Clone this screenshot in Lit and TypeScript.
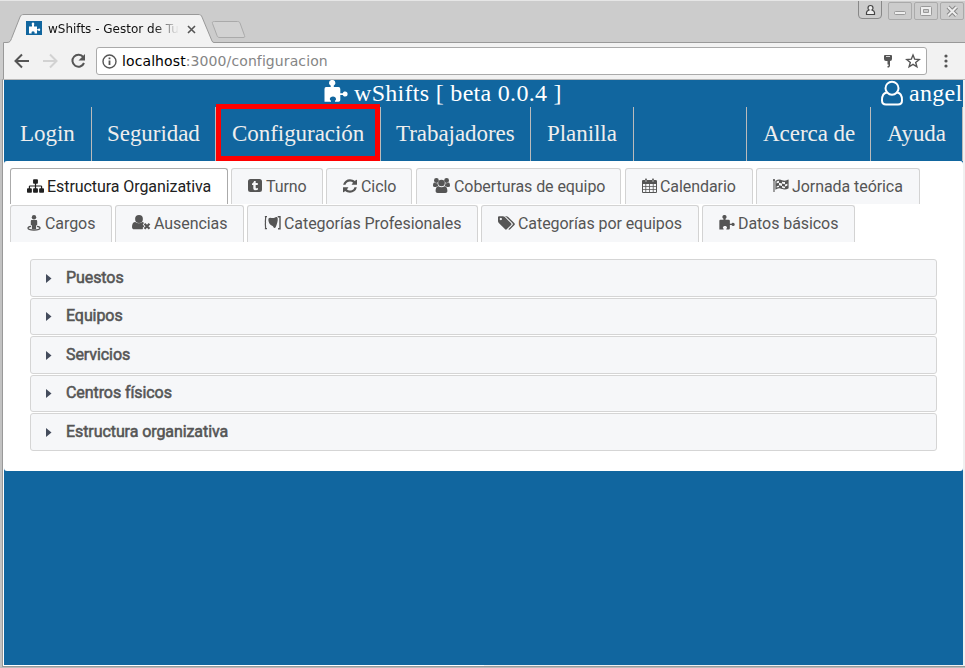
import { LitElement, html, css, svg } from "lit";
import { customElement } from "lit/decorators.js";

const icons: Record<string, { box: string; w: number; h: number; body: unknown }> = {
  sitemap: { box: "0 0 1792 1792", w: 17, h: 16, body: svg`<path d="M1792 1248v320q0 40-28 68t-68 28h-320q-40 0-68-28t-28-68v-320q0-40 28-68t68-28h96v-192h-512v192h96q40 0 68 28t28 68v320q0 40-28 68t-68 28h-320q-40 0-68-28t-28-68v-320q0-40 28-68t68-28h96v-192h-512v192h96q40 0 68 28t28 68v320q0 40-28 68t-68 28h-320q-40 0-68-28t-28-68v-320q0-40 28-68t68-28h96v-192q0-52 38-90t90-38h512v-192h-96q-40 0-68-28t-28-68v-320q0-40 28-68t68-28h320q40 0 68 28t28 68v320q0 40-28 68t-68 28h-96v192h512q52 0 90 38t38 90v192h96q40 0 68 28t28 68z"/>` },
  tumblr: { box: "0 0 14 16", w: 14, h: 16, body: svg`<path fill-rule="evenodd" d="M2.500 1h9a2.500 2.500 0 0 1 2.500 2.500v8a2.500 2.500 0 0 1-2.500 2.500h-9a2.500 2.500 0 0 1-2.500-2.500v-8a2.500 2.500 0 0 1 2.500-2.500zM6 3c-.2 1.400-.9 2.100-2 2.500v1.500h1.300v3.200c0 1.500 1 2.100 2.400 2.100 1 0 1.700-.3 2.300-.7v-1.700c-.9.5-2.300.7-2.300-.5V7h2.100V5.100H7.700V3z"/>` },
  refresh: { box: "128 0 1536 1792", w: 14, h: 16, body: svg`<path d="M1639 1056q0 5-1 7-64 268-268 434.500t-478 166.500q-146 0-282.500-55t-243.500-157l-129 129q-19 19-45 19t-45-19-19-45v-448q0-26 19-45t45-19h448q26 0 45 19t19 45-19 45l-137 137q71 66 161 102t187 36q134 0 250-65t186-179q11-17 53-117 8-23 30-23h192q13 0 22.500 9.500t9.500 22.500zm25-800v448q0 26-19 45t-45 19h-448q-26 0-45-19t-19-45 19-45l138-138q-148-137-349-137-134 0-250 65t-186 179q-11 17-53 117-8 23-30 23h-199q-13 0-22.500-9.500t-9.500-22.500v-7q65-268 270-434.500t480-166.500q146 0 284 55.500t245 156.500l130-129q19-19 45-19t45 19 19 45z"/>` },
  group: { box: "0 0 17 16", w: 17, h: 16, body: svg`<circle cx="3.400" cy="2.500" r="2.400"/><circle cx="13.600" cy="2.500" r="2.400"/><circle cx="8.500" cy="5" r="3.300"/><path d="M0 8C0 5.800.4 4.500 1.500 4.500c.5.400 1.800.9 2.900.6.100 1.300.5 2 .9 2.800-.9 0-1.600.4-2.100 1H1.500C.6 8.900 0 8.500 0 8zM17 8C17 5.800 16.600 4.500 15.500 4.500c-.5.400-1.800.9-2.900.6-.1 1.300-.5 2-.9 2.800.9 0 1.600.4 2.100 1h1.700c.9 0 1.500-.4 1.500-.9zM5.500 8.300c1.600 1.400 4.400 1.400 6 0 2.100-.1 2.900 2.200 2.900 4.700 0 1.300-.8 2-2 2H4.600c-1.200 0-2-.7-2-2 0-2.500.8-4.800 2.900-4.700z"/>` },
  calendar: { box: "0 0 15 16", w: 15, h: 16, body: svg`<path fill-rule="evenodd" d="M3 1.500C3 .3 5 .3 5 1.500V2h5v-.5c0-1.200 2-1.200 2 0V2h1.500c.8 0 1.500.5 1.500 1.300v10.400c0 .8-.6 1.300-1.300 1.300H1.300C.5 15 0 14.500 0 13.700V3.300C0 2.500.6 2 1.300 2H3zM1 6v2.200h2.400V6zm3.200 0v2.200h2.900V6zm3.700 0v2.200h2.900V6zm3.700 0v2.200H14V6zM1 9v2.200h2.400V9zm3.200 0v2.200h2.900V9zm3.700 0v2.200h2.900V9zm3.700 0v2.200H14V9zM1 12v2h2.400v-2zm3.200 0v2h2.900v-2zm3.700 0v2h2.900v-2zm3.700 0v2H14v-2zM3.700 1.500V4h.6V1.500zm7 0V4h.6V1.500z"/>` },
  flag: { box: "0 0 16 16", w: 16, h: 16, body: svg`<path d="M1 1.500V14" fill="none" stroke="currentColor" stroke-width="1.100"/><circle cx="1" cy="2" r="1"/><path fill="none" stroke="currentColor" stroke-width="1.200" d="M3 3.200c2-1.400 4-1.600 6-.3 2 1 4 .6 6-.5v7.500c-2 1.100-4 1.400-6 .3-2-1-4-.8-6 .5z"/><path d="M6 2l3 .8v2.700L6 4.700zM3 5.500l3-.8v2.800L3 8.500zM9 5.500l3 .7v2.600L9 8.100zM12 3.500l3-.8v2.800l-3 .9zM6 7.300l3 .8v2.500L6 9.600zM12 8.500l3-1v2.400l-3 1z"/>` },
  street: { box: "0 0 14 16", w: 14, h: 16, body: svg`<circle cx="7" cy="2.200" r="2.200"/><path d="M5 5h4c.9 0 1.200.5 1.200 1.200v3.300c0 .7-.6.900-1.100.9V14H4.900v-3.600c-.5 0-1.100-.2-1.100-.9V6.200C3.800 5.500 4.100 5 5 5z"/><path d="M4 11.400c-1.900.3-3 .8-3 1.600 0 1.200 2.600 2 6 2s6-.8 6-2c0-.8-1.100-1.300-3-1.600" fill="none" stroke="currentColor" stroke-width="1.300"/>` },
  userx: { box: "0 0 19 16", w: 19, h: 16, body: svg`<circle cx="7" cy="4" r="3.900"/><path d="M3.300 7C1.200 7 0 8.900 0 12 0 13.500.9 14.300 2.300 14.300h8.300l.4-.8-.3-.7 1.600-1.600-1.600-1.600L12 7.900c-.4-.6-1-.9-1.700-.9-2 1.600-5 1.600-7 0z"/><path d="M12.500 8.700l5 5M17.500 8.700l-5 5" stroke="currentColor" stroke-width="2.200"/>` },
  category: { box: "0 0 17 16", w: 17, h: 16, body: svg`<path d="M3 1.700H1.500c.5 2-.5 4 0 6-.5 2 .4 4 0 6H3" fill="none" stroke="currentColor" stroke-width="1.200"/><path d="M4.500 3.500C6 1.500 8.500 4 10.500 2.700 12 1.500 13.500 1.500 13.700 3.500 14 6 13 9 11.800 12c-.6 1.300-1.900 1.200-2.300.2C9 10.500 7.500 11 6.200 9.500 4.800 7.800 4 5.500 4.500 3.500z"/><path d="M13.700 1.700h2.300v12h-2" fill="none" stroke="currentColor" stroke-width="1.400"/>` },
  tags: { box: "0 0 1920 1792", w: 17, h: 16, body: svg`<path d="M448 448q0-53-37.500-90.500t-90.500-37.500-90.500 37.500-37.500 90.500 37.500 90.500 90.500 37.500 90.500-37.500 37.500-90.500zm1067 576q0 53-37 90l-491 492q-39 37-91 37-53 0-90-37l-715-716q-38-37-64.500-101t-26.500-117v-416q0-52 38-90t90-38h416q53 0 117 26.500t102 64.500l715 714q37 39 37 91zm384 0q0 53-37 90l-491 492q-39 37-91 37-36 0-59-14t-53-45l470-470q37-37 37-90 0-52-37-91l-715-714q-38-38-102-64.500t-117-26.500h224q53 0 117 26.500t102 64.500l715 714q37 39 37 91z"/>` },
  puzzle: { box: "0 0 24 24", w: 16, h: 16, body: svg`<path d="M.5 9Q.5 7 2 7h4.700V5.600C5.500 4.900 5 4 5 3.100a3.200 3.200 0 0 1 6.400 0c0 .9-.5 1.800-1.600 2.500V7H14.500q1.800 0 1.800 2v4.200h2.500c.6-1.200 1.300-1.600 2.300-1.600a2.500 2.500 0 0 1 0 5c-1 0-1.700-.5-2.300-1.600h-2.500v5q0 1.800-1.800 1.800H11v-1c.8-.5 1-1 1-1.700 0-1.500-1.300-2.500-3-2.500s-3.200 1-3.200 2.500c0 .7.400 1.200 1.200 1.700v1H.5z"/>` },
  user: { box: "0 0 24 28", w: 24, h: 28, body: svg`<path fill="none" stroke="currentColor" stroke-width="2" d="M6.800 12.800C3 12.800 2 17 2 20.500c0 2.700 1.700 4 4 4h12c2.300 0 4-1.300 4-4 0-3.500-1-7.700-4.800-7.700"/><circle cx="12" cy="8.200" r="6.500" fill="none" stroke="currentColor" stroke-width="2"/>` },
};

const icon = (name: string, w?: number, h?: number) => {
  const i = icons[name];
  return html`<svg width=${w ?? i.w} height=${h ?? i.h} viewBox=${i.box} fill="currentColor" preserveAspectRatio="none">${i.body}</svg>`;
};

type Tab = { label: string; icon: string; width: number; lead: number; gap?: number };

const tabRows: Tab[][] = [
  [
    { label: "Estructura Organizativa", icon: "sitemap", width: 218, lead: 37 },
    { label: "Turno", icon: "tumblr", width: 92, lead: 35 },
    { label: "Ciclo", icon: "refresh", width: 86, lead: 35 },
    { label: "Coberturas de equipo", icon: "group", width: 205, lead: 38, gap: 4 },
    { label: "Calendario", icon: "calendar", width: 128, lead: 35, gap: 4 },
    { label: "Jornada teórica", icon: "flag", width: 164, lead: 36 },
  ],
  [
    { label: "Cargos", icon: "street", width: 102, lead: 35 },
    { label: "Ausencias", icon: "userx", width: 129, lead: 39 },
    { label: "Categorías Profesionales", icon: "category", width: 231, lead: 37 },
    { label: "Categorías por equipos", icon: "tags", width: 218, lead: 37 },
    { label: "Datos básicos", icon: "puzzle", width: 153, lead: 36 },
  ],
];

@customElement("app-root")
export class AppRoot extends LitElement {
  static styles = css`
    :host { display: block; width: 965px; height: 668px; overflow: hidden; }
    * { box-sizing: border-box; }
    svg { display: block; flex: none; }
    .window { height: 668px; display: flex; flex-direction: column; background: #ccc; border-top: 1px solid #e6e6e6; }
    .strip { height: 42px; display: flex; position: relative; flex: none; }
    .shape { position: absolute; left: 0; top: 0; }
    .caption { display: flex; align-items: center; position: relative; margin: 14px 0 0 26px; height: 26px; width: 176px; font: 12px/26px "DejaVu Sans", sans-serif; white-space: nowrap; color: #111; }
    .caption span { width: 136px; margin-left: 6px; padding-top: 2px; -webkit-mask-image: linear-gradient(90deg, #000 106px, transparent 131px); }
    .caption .close { margin: 2px 0 0 3px; }
    .controls { position: absolute; right: 0; top: 0; }
    .bar { height: 36px; flex: none; display: flex; align-items: center; background: #f2f2f2; margin-left: 3px; border-left: 1px solid #999; padding-left: 10px; }
    .bar > svg + svg { margin-left: 12px; }
    .field { width: 831px; height: 28px; border: 1px solid #aaa; border-radius: 3px; background: #fff; display: flex; align-items: center; margin-left: 10px; padding: 0 5px; font: 14px/26px "DejaVu Sans", sans-serif; letter-spacing: 0.1px; color: #858585; }
    .field b { font-weight: 400; color: #000; }
    .url { margin-left: 5px; flex: 1; }
    .field .star { margin-left: 12px; }
    .bar > .more { margin-left: 17px; }
    .frame { height: 589px; display: flex; background: #f2f2f2; border-left: 2px solid #c2c2c2; border-bottom: 1px solid #bbb; }
    .rim { flex: 1; border: solid #999; border-width: 0 0 1px 1px; padding: 0 2px 1px 1px; border-top: 1px solid #b8b8b8; background: linear-gradient(90deg, #fff 50%, #f0f0f0 50%); }
    .page { height: 585px; width: 959px; background: #11669f; overflow: hidden; }
    .head { height: 27px; display: flex; font: 24px/27px "Liberation Serif", serif; letter-spacing: 0.3px; color: #fff; position: relative; white-space: nowrap; }
    .brand { margin-left: 320px; display: flex; flex: 1; gap: 6px; }
    .who { display: flex; gap: 5px; width: 83px; }
    .nav { height: 54px; display: flex; font: 23px/53px "Liberation Serif", serif; letter-spacing: -0.05px; color: #eee; white-space: nowrap; }
    .nav div { border-right: 1px solid #bbb; padding-left: 16px; position: relative; }
    .n1 { width: 88px; } .n2 { width: 124px; } .n3 { width: 165px; } .n4 { width: 150px; } .n5 { width: 103px; } .n6 { width: 113px; } .n7 { width: 124px; } .n8 { width: 92px; }
    .nav .n2, .nav .n4 { padding-left: 15px; }
    .mark { position: absolute; left: 0; top: -3px; width: 164px; height: 57px; border: 5px solid #f00; }
    .panel { height: 310px; background: #fff; border-radius: 3px; padding: 7px 6px; font: 16px/36px Roboto, sans-serif; color: #555; }
    .tabs { display: flex; gap: 3px; height: 36px; margin-bottom: 1px; letter-spacing: -0.07px; }
    .tabs.second { height: 37px; margin: 0; }
    .tab { border: 1px solid #d3d3d3; border-bottom: 0; border-radius: 3px 3px 0 0; background: #f6f7f9; display: flex; align-items: center; padding: 0 0 0 16px; line-height: 35px; white-space: nowrap; }
    .tab svg { margin-bottom: 1px; }
    .second .tab { padding-bottom: 2px; line-height: 33px; }
    .tab.on { background: #fff; border-color: #aaa; color: #212121; }
    .lead { flex: none; }
    .list { margin: 17px 20px 0; display: flex; flex-direction: column; gap: 1px; }
    .row { height: 37.600px; border: 1px solid #d5d5d5; border-radius: 3px; background: #f6f7f9; display: flex; align-items: center; padding: 0 0 0.500px 15px; letter-spacing: -0.08px; -webkit-text-stroke: 0.55px #555; }
    .row svg { margin: 1px 14px 0 0; }
  `;

  render() {
    return html`<div class="window">
      <div class="strip">
        <svg class="shape" width="965" height="42" viewBox="0 1 965 42" fill="none" stroke="#999">
          <path d="M3.500 44V42.500H7c3 0 3.500-1.500 4.500-4L20 17c1-2 1.500-2.500 4-2.500h174c2.500 0 3.200.5 4 2.500l10 24q.6 1.500 2 1.500H967v3H3z" fill="#f2f2f2"/>
          <path d="M214.500 21.500h23c1.500 0 2 .5 2.500 1.500l4.500 12.500c.5 1.500.2 2-1.500 2h-23c-2 0-2.500-.5-3-2l-4.500-12c-.5-1.500.2-2 2-2z" fill="#d2d2d2" stroke="#aaa"/>
        </svg>
        <div class="caption">
          <svg width="16" height="14" viewBox="0 0 16 14"><path d="M0 0h16v14H0z" fill="#11669f"/><path d="M3 5.500h3V4C5.300 3 5.700 1.500 7 1.500S8.700 3 8 4v1.500h3v2.700h1c.5-1.200 2.200-.8 2.200.5s-1.700 1.700-2.200.6h-1V12.500H8.500C9 11 8 10.300 7 10.300s-1.800.7-1.300 2.200H3z" fill="#fff"/></svg>
          <span>wShifts - Gestor de Tur</span>
          <svg class="close" width="9" height="9" viewBox="0 0 9 9" stroke="#555" stroke-width="1.600"><path d="M1 1l7 7M8 1L1 8"/></svg>
        </div>
        <svg class="controls" width="109" height="22" viewBox="856 1 109 22" fill="none">
          <path d="M858.500 0v15q0 3.500 3.500 3.500h16q3.500 0 3.500-3.500V0" stroke="#888"/>
          <path d="M866.500 14.500v-2q0-1.500 2.500-2.500-1-.5-1-2 0-2.500 2.500-2.500t2.500 2.500q0 1.500-1 2 2.500 1 2.500 2.500v2z" stroke="#444" fill="#eee" stroke-width="1.200"/>
          <g stroke="#aaa"><rect x="888.500" y="2.500" width="23" height="17" rx="1.500"/><rect x="914.500" y="2.500" width="23" height="17" rx="1.500"/><rect x="940.500" y="2.500" width="23" height="17" rx="1.500"/></g>
          <g stroke="#999" fill="#eee"><rect x="894.500" y="11.500" width="11" height="3" rx="1"/><path fill-rule="evenodd" d="M921.500 6.500h9q1 0 1 1v7q0 1-1 1h-9q-1 0-1-1v-7q0-1 1-1zM923.500 9.500v3h5v-3z"/></g>
          <path d="M948 7l8.500 8.500M956.500 7L948 15.500" stroke="#888" stroke-width="4"/><path d="M948 7l8.500 8.500M956.500 7L948 15.500" stroke="#eee" stroke-width="2"/>
        </svg>
      </div>
      <div class="bar">
        <svg width="16" height="16" viewBox="0 0 16 16" fill="none" stroke="#555" stroke-width="2"><path d="M15 8H2M8 1.500L1.500 8 8 14.500"/></svg>
        <svg width="16" height="16" viewBox="0 0 16 16" fill="none" stroke="#d2d2d2" stroke-width="2"><path d="M1 8h13M8 1.500L14.500 8 8 14.500"/></svg>
        <svg width="16" height="16" viewBox="0 0 16 16" fill="none" stroke="#555" stroke-width="2"><path d="M13.300 4.200A6 6 0 1 0 14 10"/><path d="M15 1v6.500H8.500z" fill="#555" stroke="none"/></svg>
        <div class="field">
          <svg width="15" height="15" viewBox="0 0 15 15" fill="none" stroke="#555" stroke-width="1.400"><circle cx="7.500" cy="7.500" r="6.500"/><path d="M7.500 6.500V11M7.500 3.500v1.700" stroke-width="1.800"/></svg>
          <div class="url"><b>localhost</b>:3000/configuracion</div>
          <svg width="10" height="14" viewBox="0 0 10 14" fill="#555"><path fill-rule="evenodd" d="M2 1h6q1 0 1 1v3q0 2-2 2v5l-1 1.500H4.500V12h1v-1.500h-1V7H3Q1 7 1 5V2q0-1 1-1zm1 1v.8h4V2z"/></svg>
          <svg class="star" width="16" height="16" viewBox="0 0 16 16" fill="none" stroke="#555" stroke-width="1.400"><path d="M8 2l1.700 4.200 4.500.3-3.500 2.900 1.200 4.400L8 11.400l-3.900 2.400 1.200-4.400L1.800 6.500l4.500-.3z"/></svg>
        </div>
        <svg class="more" width="4" height="14" viewBox="0 0 4 14" fill="#555"><circle cx="2" cy="2" r="1.600"/><circle cx="2" cy="7" r="1.600"/><circle cx="2" cy="12" r="1.600"/></svg>
      </div>
      <div class="frame"><div class="rim"><div class="page">
        <div class="head">
          <div class="brand">${icon("puzzle", 24, 24)}<span>wShifts [ beta 0.0.4 ]</span></div>
          <div class="who">${icon("user")}<span>angel</span></div>
        </div>
        <div class="nav">
          <div class="n1">Login</div><div class="n2">Seguridad</div>
          <div class="n3">Configuración<span class="mark"></span></div>
          <div class="n4">Trabajadores</div><div class="n5">Planilla</div><div class="n6"></div>
          <div class="n7">Acerca de</div><div class="n8">Ayuda</div>
        </div>
        <div class="panel">
          ${tabRows.map((row, r) => html`<div class="tabs ${r ? "second" : ""}">${row.map((t, i) => html`<div class="tab ${!r && !i ? "on" : ""}" style="width:${t.width}px;margin-left:${(t.gap ?? 3) - 3}px"><div class="lead" style="width:${t.lead - 17}px">${icon(t.icon)}</div>${t.label}</div>`)}</div>`)}
          <div class="list">
            ${["Puestos", "Equipos", "Servicios", "Centros físicos", "Estructura organizativa"].map((s) => html`<div class="row"><svg width="6" height="9" viewBox="0 0 6 9" fill="#444c5c"><path d="M0 0l5.500 4.500L0 9z"/></svg>${s}</div>`)}
          </div>
        </div>
      </div></div></div>
    </div>`;
  }
}
